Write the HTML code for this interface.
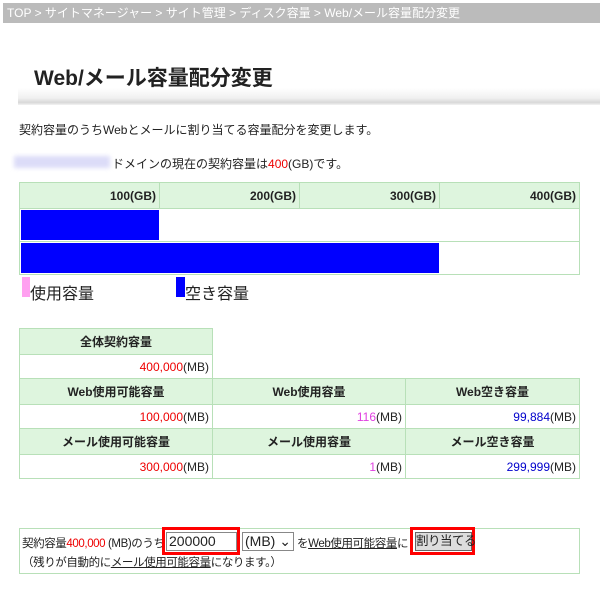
<!DOCTYPE html>
<html><head><meta charset="utf-8"><style>
*{margin:0;padding:0;box-sizing:border-box}
body{width:600px;height:592px;background:#fff;font-family:"Liberation Sans","Noto Sans CJK JP",sans-serif;font-size:12px;color:#222;position:relative;overflow:hidden}
.abs{position:absolute;white-space:nowrap}
.bc{left:3px;top:3px;width:597px;height:20px;background:#bbb;color:#fff;font-size:12px;line-height:20px;padding-left:4px}
h1{position:absolute;left:34px;top:62px;font-size:21px;font-weight:bold;color:#222}
.band{left:18px;top:88px;width:582px;height:17px;background:linear-gradient(#fff,#f0f0f0 60%,#d8d8d8 85%,#f4f4f4)}
table{border-collapse:collapse;position:absolute;table-layout:fixed}
td{border:1px solid #b8e0b8}
.g{background:#def5de;font-weight:bold;text-align:center}
.r{color:#e00}.p{color:#e040e0}.b{color:#00c}
.n{letter-spacing:-0.4px}
</style></head><body>
<div class="abs bc">TOP &gt; サイトマネージャー &gt; サイト管理 &gt; ディスク容量 &gt; Web/メール容量配分変更</div>
<h1>Web/メール容量配分変更</h1>
<div class="abs band"></div>
<div class="abs" style="left:19px;top:121px">契約容量のうちWebとメールに割り当てる容量配分を変更します。</div>
<div class="abs" style="left:14px;top:156px;width:96px;height:12px;background:#dcdcf8;filter:blur(2px)"></div>
<div class="abs" style="left:112px;top:155px">ドメインの現在の契約容量は<span class="r">400</span>(GB)です。</div>
<table style="left:19px;top:182px;width:561px">
<col style="width:140px"><col style="width:140px"><col style="width:140px"><col>
<tr style="height:26px"><td class="g" style="text-align:right;padding-right:3px">100(GB)</td><td class="g" style="text-align:right;padding-right:3px">200(GB)</td><td class="g" style="text-align:right;padding-right:3px">300(GB)</td><td class="g" style="text-align:right;padding-right:3px">400(GB)</td></tr>
<tr style="height:33px"><td colspan="4" style="padding:1px"><div style="width:138px;height:30px;background:#00f"></div></td></tr>
<tr style="height:33px"><td colspan="4" style="padding:1px"><div style="width:418px;height:30px;background:#00f"></div></td></tr>
</table>
<div class="abs" style="left:22px;top:277px;width:8px;height:20px;background:#ffa0f0"></div>
<div class="abs" style="left:30px;top:280px;font-size:16px">使用容量</div>
<div class="abs" style="left:176px;top:277px;width:9px;height:20px;background:#00f"></div>
<div class="abs" style="left:185px;top:280px;font-size:16px">空き容量</div>
<table style="left:19px;top:328px;width:561px">
<col style="width:193px"><col style="width:193px"><col>
<tr style="height:26px"><td class="g">全体契約容量</td><td colspan="2" style="border:none"></td></tr>
<tr style="height:24px"><td style="text-align:right;padding-right:3px"><span class="r">400,000</span>(MB)</td><td colspan="2" style="border:none;border-bottom:1px solid #b8e0b8"></td></tr>
<tr style="height:26px"><td class="g">Web使用可能容量</td><td class="g">Web使用容量</td><td class="g">Web空き容量</td></tr>
<tr style="height:24px"><td style="text-align:right;padding-right:3px"><span class="r">100,000</span>(MB)</td><td style="text-align:right;padding-right:3px"><span class="p">116</span>(MB)</td><td style="text-align:right;padding-right:3px"><span class="b">99,884</span>(MB)</td></tr>
<tr style="height:26px"><td class="g">メール使用可能容量</td><td class="g">メール使用容量</td><td class="g">メール空き容量</td></tr>
<tr style="height:24px"><td style="text-align:right;padding-right:3px"><span class="r">300,000</span>(MB)</td><td style="text-align:right;padding-right:3px"><span class="p">1</span>(MB)</td><td style="text-align:right;padding-right:3px"><span class="b">299,999</span>(MB)</td></tr>
</table>
<div class="abs" style="left:19px;top:528px;width:561px;height:46px;border:1px solid #b8e0b8"></div>
<div class="abs n" style="left:22px;top:535px;font-size:11.5px">契約容量<span class="r">400,000</span> (MB)のうち</div>
<div class="abs" style="left:162px;top:527px;width:78px;height:28px;border:3px solid #f00"></div>
<div class="abs" style="left:166px;top:532px;width:71px;height:19px;border:1px solid #888;font-size:14px;line-height:17px;padding-left:2px;background:#fff">200000</div>
<div class="abs" style="left:242px;top:532px;width:52px;height:19px;border:1px solid #888;font-size:14px;line-height:17px;padding-left:2px">(MB) ⌄</div>
<div class="abs n" style="left:297px;top:535px;font-size:11.5px">を<u>Web使用可能容量</u>に</div>
<div class="abs" style="left:410px;top:527px;width:65px;height:28px;border:3px solid #f00"></div>
<div class="abs" style="left:415px;top:532px;width:57px;height:19px;border:1px solid #666;background:#ddd;font-size:12.5px;line-height:17px;text-align:center;letter-spacing:-0.5px">割り当てる</div>
<div class="abs n" style="left:22px;top:554px;font-size:11.5px">（残りが自動的に<u>メール使用可能容量</u>になります。）</div>
</body></html>
